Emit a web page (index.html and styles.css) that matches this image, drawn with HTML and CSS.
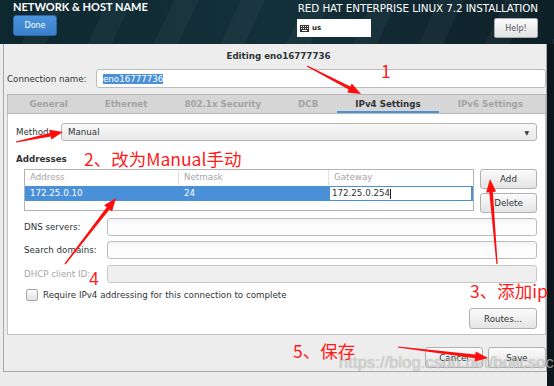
FILE: index.html
```html
<!DOCTYPE html>
<html lang="zh">
<head>
    <meta charset="UTF-8">
    <title>Network &amp; Host Name</title>
    <link rel="stylesheet" href="styles.css">
</head>
<body>
    <div class="topbar">
        <div class="spoke">
            <div class="spoke-title">NETWORK &amp; HOST NAME</div>
            <button class="done-btn">Done</button>
        </div>
        <div class="product">
            <div class="product-title">RED HAT ENTERPRISE LINUX 7.2 INSTALLATION</div>
            <div class="product-row">
                <div class="kbd-field">
                    <svg class="kbd-icon" width="9" height="7" viewBox="0 0 9 7">
                        <rect x="0" y="0" width="9" height="7" fill="#333"/>
                        <rect x="1" y="1" width="1" height="1" fill="#fff"/>
                        <rect x="3" y="1" width="1" height="1" fill="#fff"/>
                        <rect x="5" y="1" width="1" height="1" fill="#fff"/>
                        <rect x="7" y="1" width="1" height="1" fill="#fff"/>
                        <rect x="1" y="3" width="1" height="1" fill="#fff"/>
                        <rect x="3" y="3" width="1" height="1" fill="#fff"/>
                        <rect x="5" y="3" width="1" height="1" fill="#fff"/>
                        <rect x="7" y="3" width="1" height="1" fill="#fff"/>
                        <rect x="2" y="5" width="5" height="1" fill="#fff"/>
                    </svg>
                    <span>us</span>
                </div>
                <button class="help-btn">Help!</button>
            </div>
        </div>
    </div>

    <div class="main">
        <div class="dialog">
            <div class="dialog-title">Editing eno16777736</div>
            <div class="conn-row">
                <label>Connection name:</label>
                <div class="conn-input"><span class="sel">eno16777736</span></div>
            </div>

            <div class="tabs">
                <div class="tab">General</div>
                <div class="tab">Ethernet</div>
                <div class="tab">802.1x Security</div>
                <div class="tab">DCB</div>
                <div class="tab active">IPv4 Settings</div>
                <div class="tab">IPv6 Settings</div>
            </div>

            <div class="panel">
                <div class="method-row">
                    <label>Method:</label>
                    <div class="combo"><span>Manual</span><span class="caret">&#9660;</span></div>
                </div>

                <div class="section-label">Addresses</div>
                <div class="addr-row">
                    <div class="addr-table">
                        <div class="addr-head">
                            <div class="cell">Address</div>
                            <div class="cell">Netmask</div>
                            <div class="cell">Gateway</div>
                        </div>
                        <div class="addr-line selected">
                            <div class="cell">172.25.0.10</div>
                            <div class="cell">24</div>
                            <div class="cell editing">172.25.0.254<span class="cursor"></span></div>
                        </div>
                    </div>
                    <div class="addr-buttons">
                        <button class="btn">Add</button>
                        <button class="btn">Delete</button>
                    </div>
                </div>

                <div class="field-row">
                    <label>DNS servers:</label>
                    <div class="entry"></div>
                </div>
                <div class="field-row">
                    <label>Search domains:</label>
                    <div class="entry"></div>
                </div>
                <div class="field-row disabled">
                    <label>DHCP client ID:</label>
                    <div class="entry"></div>
                </div>

                <div class="check-row">
                    <span class="checkbox"></span>
                    <span>Require IPv4 addressing for this connection to complete</span>
                </div>

                <div class="routes-row">
                    <button class="btn routes-btn">Routes...</button>
                </div>
            </div>

            <div class="dialog-actions">
                <button class="btn action-btn">Cancel</button>
                <button class="btn action-btn">Save</button>
            </div>
        </div>
    </div>

    <div class="watermark">https://blog.csdn.net/bolicsoc</div>

    <!-- red annotations drawn over the screenshot -->
    <svg class="arrows" width="554" height="386" viewBox="0 0 554 386">
        <polygon points="306.7,66.5 348.7,89.6 347.2,92.4 361,94 351.8,83.6 350.3,86.4 307.3,65.5"/>
        <polygon points="16.1,142.6 50.7,136.5 51.3,139.6 63,132 49.3,129.8 49.9,132.9 15.9,141.4"/>
        <polygon points="65.5,264.4 109.5,209.4 112.1,211.4 116,198 104.1,205.2 106.7,207.2 64.5,263.6"/>
        <polygon points="497.6,264 492.9,191.9 496.1,191.6 490,179 486.1,192.4 489.3,192.2 496.4,264"/>
        <polygon points="397.9,347.6 474.9,358.2 474.5,361.4 488,358 475.7,351.4 475.3,354.6 398.1,346.4"/>
    </svg>
    <div class="note note-1">1</div>
    <div class="note note-2">2、改为Manual手动</div>
    <div class="note note-3">3、添加ip</div>
    <div class="note note-4">4</div>
    <div class="note note-5">5、保存</div>
</body>
</html>
```

FILE: styles.css
```css
body {
    margin: 0;
    width: 554px;
    height: 386px;
    overflow: hidden;
    position: relative;
    background: #0b171b;
    font-family: "DejaVu Sans", sans-serif;
    font-size: 8.7px;
    color: #2e3436;
}

button {
    font-family: "DejaVu Sans", sans-serif;
    padding: 0;
    cursor: pointer;
}

/* header */
.topbar {
    height: 44px;
    display: flex;
    justify-content: space-between;
    padding: 0 16px 0 13px;
    background:
        repeating-linear-gradient(115deg, rgba(255,255,255,0) 0 38px, rgba(255,255,255,0.035) 38px 60px),
        linear-gradient(90deg, #0e2830, #14303a 50%, #0d2028);
}

.spoke-title {
    color: #fff;
    font-family: Lato, sans-serif;
    font-weight: bold;
    font-size: 11px;
    margin-top: 0;
}

.done-btn {
    margin-top: 2px;
    width: 44px;
    height: 21px;
    border: 1px solid #2a67a8;
    border-radius: 3px;
    background: linear-gradient(#4b94de, #3a7fcb);
    color: #fff;
    font-size: 8px;
}

.product {
    display: flex;
    flex-direction: column;
    align-items: flex-end;
}

.product-title {
    color: #fff;
    font-size: 10.4px;
    margin-top: 2px;
    letter-spacing: -0.1px;
}

.product-row {
    display: flex;
    justify-content: space-between;
    align-items: center;
    width: 241px;
    margin-top: 4px;
}

.kbd-field {
    width: 74px;
    height: 18px;
    background: #fff;
    display: flex;
    align-items: center;
    gap: 3px;
    padding-left: 3px;
    box-sizing: border-box;
    font-size: 7px;
    font-weight: bold;
    color: #222;
}

.help-btn {
    width: 44px;
    height: 20px;
    border: 1px solid #aaa;
    border-radius: 2px;
    background: linear-gradient(#fafafa, #e3e3e3);
    color: #555;
    font-size: 8px;
}

/* dialog */
.main {
    height: 342px;
    margin-right: 7px;
    background: #ececec;
    padding-left: 3px;
}

.dialog {
    width: 544px;
    height: 328px;
    box-sizing: border-box;
    border: 1px solid #a9a9a9;
    border-top: none;
    background: #ededed;
    padding-left: 3px;
    display: flex;
    flex-direction: column;
}

.dialog-title {
    height: 25px;
    line-height: 25px;
    text-align: center;
    font-weight: bold;
    padding-left: 4px;
}

.conn-row {
    display: flex;
    align-items: center;
    height: 19px;
    margin-bottom: 6px;
}

.conn-row label {
    width: 89px;
}

.conn-input {
    flex: 1;
    height: 19px;
    box-sizing: border-box;
    border: 1px solid #bcbcbc;
    border-radius: 3px;
    background: #fff;
    padding-left: 6px;
    display: flex;
    align-items: center;
}

.sel {
    background: #4a90d9;
    color: #fff;
}

.tabs {
    height: 20px;
    box-sizing: border-box;
    border: 1px solid #b9b9b9;
    background: #d6d6d6;
    display: flex;
    padding-left: 3px;
}

.tab {
    padding: 0 18.5px;
    line-height: 18px;
    font-weight: bold;
    color: #a3a3a3;
}

.tab.active {
    color: #2e3436;
    box-shadow: inset 0 -2px 0 #4a90d9;
}

.panel {
    height: 221px;
    box-sizing: border-box;
    border: 1px solid #c2c2c2;
    border-top: none;
    background: #fff;
    padding: 9px 8px 0 8px;
}

.method-row {
    display: flex;
    align-items: center;
    height: 18px;
}

.method-row label {
    width: 45px;
}

.combo {
    flex: 1;
    height: 18px;
    box-sizing: border-box;
    border: 1px solid #b5b5b5;
    border-radius: 3px;
    background: linear-gradient(#f8f8f8, #e9e9e9);
    display: flex;
    justify-content: space-between;
    align-items: center;
    padding: 0 7px 0 6px;
}

.caret {
    font-size: 6px;
    color: #333;
}

.section-label {
    font-weight: bold;
    margin: 13px 0 3px;
    height: 12px;
}

.addr-row {
    display: flex;
    gap: 6px;
    padding-left: 8px;
}

.addr-table {
    width: 451px;
    height: 42px;
    box-sizing: border-box;
    border: 1px solid #b3b3b3;
    background: #fff;
}

.addr-head,
.addr-line {
    display: grid;
    grid-template-columns: 154px 150px 1fr;
    height: 15px;
}

.addr-head .cell {
    color: #a6a6a6;
    border-right: 1px solid #e0e0e0;
}

.addr-head .cell:last-child {
    border-right: none;
}

.cell {
    padding-left: 5px;
    line-height: 15px;
    white-space: nowrap;
}

.addr-line.selected {
    background: #4a90d9;
    color: #fff;
    margin-top: 1px;
}

.cell.editing {
    background: #fff;
    color: #2e3436;
    border: 1px solid #4a90d9;
    line-height: 13px;
    padding-left: 2px;
    margin-right: 1px;
}

.cursor {
    display: inline-block;
    width: 1px;
    height: 10px;
    background: #222;
    vertical-align: middle;
}

.addr-buttons {
    display: flex;
    flex-direction: column;
    gap: 4px;
}

.btn {
    border: 1px solid #b1b1b1;
    border-radius: 3px;
    background: linear-gradient(#fbfbfb, #e4e4e4);
    color: #2e3436;
    font-size: 8.7px;
}

.addr-buttons .btn {
    width: 57px;
    height: 20px;
}

.field-row {
    display: flex;
    align-items: center;
    height: 18px;
    margin-top: 5px;
    padding-left: 8px;
}

.field-row:first-of-type {
    margin-top: 4px;
}

.field-row label {
    width: 83px;
}

.entry {
    flex: 1;
    height: 18px;
    box-sizing: border-box;
    border: 1px solid #bdbdbd;
    border-radius: 3px;
    background: linear-gradient(#f3f3f3, #fdfdfd 40%);
}

.field-row.disabled {
    margin-top: 6px;
}

.field-row.disabled label {
    color: #a6a6a6;
}

.field-row.disabled .entry {
    background: #efefef;
    border-color: #c8c8c8;
}

.check-row {
    display: flex;
    align-items: center;
    gap: 5px;
    margin-top: 6px;
    padding-left: 10px;
    height: 11px;
}

.checkbox {
    width: 10px;
    height: 10px;
    border: 1px solid #a9a9a9;
    border-radius: 2px;
    background: linear-gradient(#fafafa, #e2e2e2);
}

.routes-row {
    display: flex;
    justify-content: flex-end;
    margin-top: 8px;
}

.routes-btn {
    width: 68px;
    height: 21px;
}

.dialog-actions {
    display: flex;
    justify-content: flex-end;
    gap: 5px;
    margin-top: 12px;
}

.action-btn {
    width: 58px;
    height: 21px;
}

/* overlays */
.watermark {
    position: absolute;
    left: 339px;
    top: 353px;
    font-family: "Liberation Sans", sans-serif;
    font-size: 16.5px;
    color: rgba(255, 255, 255, 0.55);
    text-shadow: 0 0 1px rgba(0, 0, 0, 0.4);
    letter-spacing: 0.1px;
}

.arrows {
    position: absolute;
    left: 0;
    top: 0;
    pointer-events: none;
}

.arrows polygon {
    fill: #ff0c0c;
}

.note {
    position: absolute;
    color: #ff1a1a;
    font-family: "Noto Sans CJK SC", "Noto Sans", sans-serif;
    font-size: 17.5px;
    line-height: 1;
    white-space: nowrap;
}

.note-1 { left: 381px; top: 62px; }
.note-2 { left: 84px; top: 150px; }
.note-3 { left: 470px; top: 282px; }
.note-4 { left: 89px; top: 271px; font-family: "Liberation Sans", sans-serif; }
.note-5 { left: 293px; top: 342px; }
```
